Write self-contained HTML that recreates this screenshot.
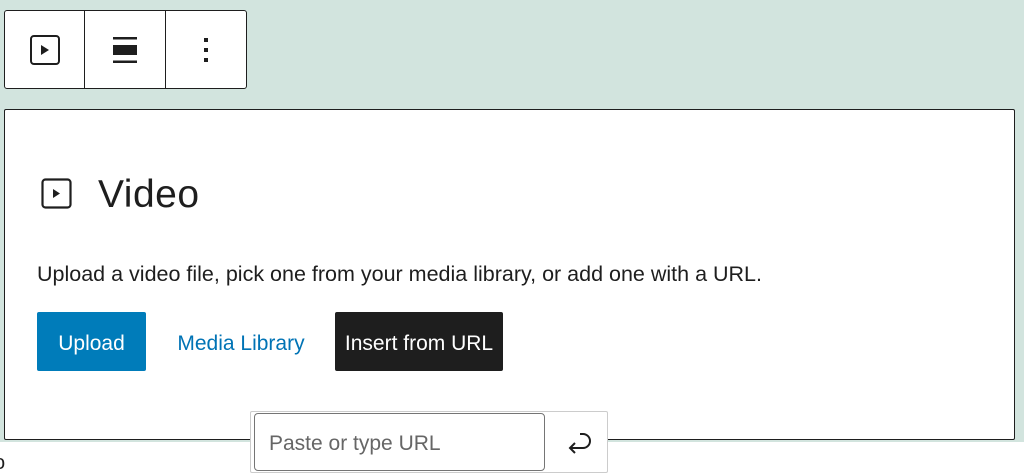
<!DOCTYPE html>
<html><head><style>
body{margin:0;width:1024px;height:476px;background:#fff;position:relative;overflow:hidden;font-family:"Liberation Sans",sans-serif;color:#1e1e1e}
.bg{position:absolute;left:0;top:0;width:1024px;height:442px;background:#d2e4de}
.tb{position:absolute;left:4px;top:10px;width:241px;height:77px;background:#fff;border:1px solid #1e1e1e;border-radius:3px;display:flex}
.tb div{height:77px;display:flex;align-items:center;justify-content:center}
.box{position:absolute;left:4px;top:109px;width:1009px;height:329px;background:#fff;border:1px solid #1e1e1e;border-radius:2px}
.abs{position:absolute}
.btn{position:absolute;top:312px;height:59px;border-radius:2px;color:#fff;font-size:21px;display:flex;align-items:center;justify-content:center;padding-top:4px;box-sizing:border-box}
</style></head><body>
<div class="bg"></div>
<div class="tb">
 <div style="width:79px;border-right:1px solid #1e1e1e"><svg width="32" height="32" viewBox="0 0 32 32"><rect x="2" y="2" width="28" height="28" rx="3" fill="none" stroke="#1e1e1e" stroke-width="2"/><path d="M12 11 L20 16 L12 21Z" fill="#1e1e1e"/></svg></div>
 <div style="width:80px;border-right:1px solid #1e1e1e"><svg width="26" height="28" viewBox="0 0 26 28"><rect x="1" y="1" width="24" height="2.5" fill="#1e1e1e"/><rect x="1" y="9" width="24" height="10" fill="#1e1e1e"/><rect x="1" y="24.5" width="24" height="2.5" fill="#1e1e1e"/></svg></div>
 <div style="width:80px"><svg width="6" height="26" viewBox="0 0 6 26"><rect x="1" y="1" width="4" height="4" fill="#1e1e1e"/><rect x="1" y="11" width="4" height="4" fill="#1e1e1e"/><rect x="1" y="21" width="4" height="4" fill="#1e1e1e"/></svg></div>
</div>
<div class="box"></div>
<svg class="abs" style="left:41px;top:178px" width="31" height="31" viewBox="0 0 31 31"><rect x="1.5" y="1.5" width="28" height="28" rx="3" fill="none" stroke="#1e1e1e" stroke-width="2.2"/><path d="M12 11 L19 15.5 L12 20Z" fill="#1e1e1e"/></svg>
<div class="abs" style="left:98px;top:172px;font-size:39px;line-height:46px;letter-spacing:0.5px">Video</div>
<div class="abs" style="left:37px;top:261px;font-size:21.5px;line-height:26px">Upload a video file, pick one from your media library, or add one with a URL.</div>
<div class="btn" style="left:37px;width:109px;background:#007cba">Upload</div>
<div class="btn" style="left:163px;width:156px;color:#0073b5;background:none">Media Library</div>
<div class="btn" style="left:335px;width:168px;background:#1e1e1e">Insert from URL</div>
<div class="abs" style="left:250px;top:411px;width:356px;height:60px;border:1px solid #ccc;border-radius:2px;background:#fff"></div>
<div class="abs" style="left:254px;top:413px;border:1px solid #757575;border-radius:4px;background:#fff;font-size:21px;color:#666;line-height:60px;padding-left:14px;box-sizing:border-box;width:291px;height:58px">Paste or type URL</div>
<svg class="abs" style="left:566px;top:430px" width="28" height="28" viewBox="0 0 28 28"><path d="M14 4 H17 A7 7 0 0 1 17 18 H4 M9 13 L4 18 L9 23" fill="none" stroke="#1e1e1e" stroke-width="2"/></svg>
<div class="abs" style="left:-6px;top:452px;font-size:20px">o</div>
</body></html>
